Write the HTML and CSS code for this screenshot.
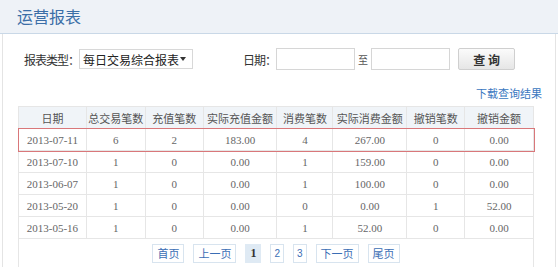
FILE: index.html
```html
<!DOCTYPE html>
<html lang="zh-CN">
<head>
    <meta charset="UTF-8">
    <title>运营报表</title>
    <link rel="stylesheet" href="styles.css">
</head>
<body>
    <div class="panel">
        <div class="panel-title">运营报表</div>

        <form class="search-bar">
            <label class="field-label">报表类型：</label>
            <div class="select-box">每日交易综合报表 <span class="caret"></span></div>
            <label class="field-label date-label">日期：</label>
            <input type="text" class="date-input">
            <span class="to">至</span>
            <input type="text" class="date-input">
            <button type="button" class="btn-query">查 询</button>
        </form>

        <div class="download-row">
            <a href="#" class="download-link">下载查询结果</a>
        </div>

        <table class="report">
            <tr>
                <th class="c1">日期</th>
                <th class="c2">总交易笔数</th>
                <th class="c3">充值笔数</th>
                <th class="c4">实际充值金额</th>
                <th class="c5">消费笔数</th>
                <th class="c6">实际消费金额</th>
                <th class="c7">撤销笔数</th>
                <th class="c8">撤销金额</th>
            </tr>
            <tr class="current">
                <td>2013-07-11</td><td>6</td><td>2</td><td>183.00</td><td>4</td><td>267.00</td><td>0</td><td>0.00</td>
            </tr>
            <tr>
                <td>2013-07-10</td><td>1</td><td>0</td><td>0.00</td><td>1</td><td>159.00</td><td>0</td><td>0.00</td>
            </tr>
            <tr>
                <td>2013-06-07</td><td>1</td><td>0</td><td>0.00</td><td>1</td><td>100.00</td><td>0</td><td>0.00</td>
            </tr>
            <tr>
                <td>2013-05-20</td><td>1</td><td>0</td><td>0.00</td><td>0</td><td>0.00</td><td>1</td><td>52.00</td>
            </tr>
            <tr>
                <td>2013-05-16</td><td>1</td><td>0</td><td>0.00</td><td>1</td><td>52.00</td><td>0</td><td>0.00</td>
            </tr>
            <tr>
                <td colspan="8" class="pager-cell">
                    <div class="pager">
                        <a href="#" class="page">首页</a>
                        <a href="#" class="page">上一页</a>
                        <span class="page active">1</span>
                        <a href="#" class="page num">2</a>
                        <a href="#" class="page num">3</a>
                        <a href="#" class="page">下一页</a>
                        <a href="#" class="page">尾页</a>
                    </div>
                </td>
            </tr>
        </table>
    </div>
</body>
</html>
```

FILE: styles.css
```css
body {
    margin: 0;
    background-color: #fff;
    font-family: "Noto Sans CJK SC", sans-serif;
    color: #333;
}

.panel {
    margin: 0 2px;
    height: 267px;
    border-left: 1px solid #e4e4e4;
    border-right: 1px solid #e4e4e4;
    box-sizing: border-box;
}

.panel-title {
    margin: 0 -3px;
    height: 33px;
    line-height: 33px;
    padding-left: 17px;
    background-color: #eef2f7;
    border-bottom: 1px solid #c9d8e7;
    color: #3b6ea7;
    font-size: 16px;
}

.search-bar {
    display: flex;
    align-items: center;
    height: 22px;
    margin-top: 14px;
    padding-left: 21px;
    font-size: 12px;
}

.field-label {
    color: #333;
    font-size: 12px;
    letter-spacing: -1px;
    white-space: nowrap;
}

.select-box {
    display: flex;
    align-items: center;
    justify-content: space-between;
    width: 114px;
    height: 20px;
    box-sizing: border-box;
    padding: 0 6px 0 3px;
    border: 1px solid #d8d8d8;
    font-size: 12px;
    white-space: nowrap;
    color: #222;
}

.caret {
    width: 0;
    height: 0;
    border-left: 3px solid transparent;
    border-right: 3px solid transparent;
    border-top: 4px solid #333;
}

.date-label {
    margin-left: 50px;
}

.date-input {
    width: 79px;
    height: 22px;
    box-sizing: border-box;
    border: 1px solid #d6d6d6;
    padding: 0;
}

.to {
    width: 16px;
    text-align: center;
    font-size: 10px;
    color: #555;
}

.btn-query {
    margin-left: 8px;
    width: 57px;
    height: 22px;
    border: 1px solid #cfcfcf;
    border-radius: 2px;
    background: linear-gradient(#fbfbfb, #e6e6e6);
    font-family: "Noto Sans CJK SC", sans-serif;
    font-size: 12px;
    font-weight: bold;
    color: #333;
    padding: 0;
}

.download-row {
    height: 21px;
    margin-top: 13px;
    margin-bottom: 2px;
    padding-right: 13px;
    text-align: right;
    line-height: 16px;
}

.download-link {
    font-size: 11px;
    color: #3a77bf;
    text-decoration: none;
}

.report {
    margin-left: 15px;
    width: 516px;
    border-collapse: collapse;
    font-family: "Liberation Serif", "Noto Sans CJK SC", serif;
    font-size: 11px;
    color: #666;
}

.report th,
.report td {
    border: 1px solid #e6e6e6;
    text-align: center;
    height: 21px;
    padding: 0;
}

.report th {
    background-color: #f0f4f8;
    color: #555;
    font-family: "Noto Sans CJK SC", sans-serif;
    font-weight: normal;
    font-size: 11px;
}

.c1 { width: 68px; }
.c2 { width: 59px; }
.c3 { width: 58px; }
.c4 { width: 74px; }
.c5 { width: 56px; }
.c6 { width: 74px; }
.c7 { width: 58px; }
.c8 { width: 69px; }

.report tr.current {
    outline: 1px solid #d9777a;
}

.report td.pager-cell {
    height: 28px;
}

.pager {
    display: flex;
    justify-content: center;
    gap: 9px;
    font-family: "Noto Sans CJK SC", sans-serif;
}

.page {
    display: inline-block;
    height: 17px;
    line-height: 17px;
    padding: 0 4px;
    border: 1px solid #d8e4ef;
    color: #3b6eb5;
    font-size: 11px;
    text-decoration: none;
}

.page.num {
    padding: 0 3px;
    font-family: "Liberation Sans", sans-serif;
    font-size: 10px;
}

.page.active {
    padding: 0 4px;
    background-color: #dfeaf4;
    border-color: #dfeaf4;
    color: #333;
    font-family: "Liberation Serif", serif;
    font-weight: bold;
    font-size: 12px;
}
```
